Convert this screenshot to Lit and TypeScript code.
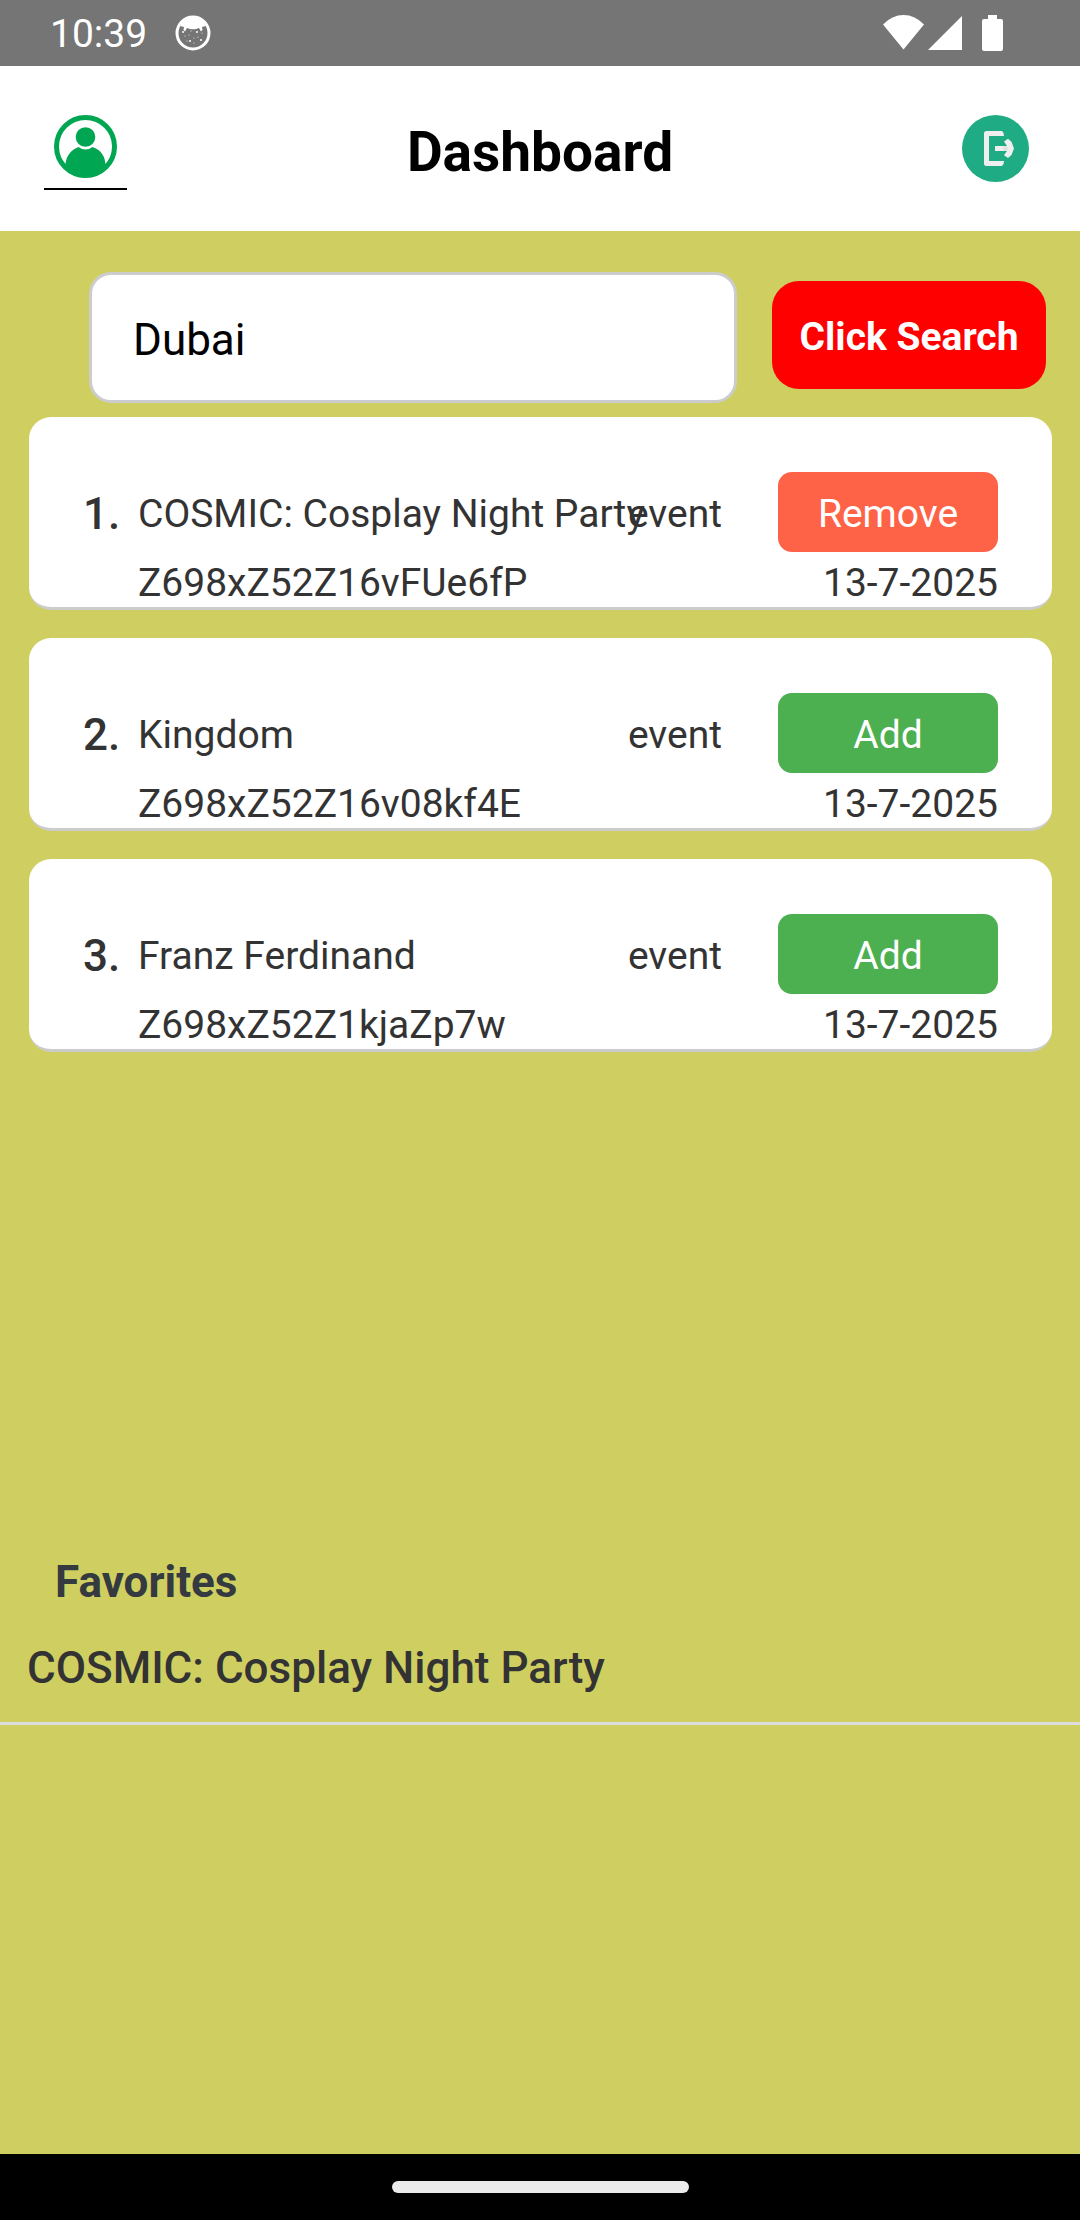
import { LitElement, html, css, svg } from "lit";
import { customElement, property, state } from "lit/decorators.js";
import { classMap } from "lit/directives/class-map.js";

interface EventItem {
  id: string;
  name: string;
  type: string;
  date: string;
}

const EVENTS: EventItem[] = [
  { id: "Z698xZ52Z16vFUe6fP", name: "COSMIC: Cosplay Night Party", type: "event", date: "13-7-2025" },
  { id: "Z698xZ52Z16v08kf4E", name: "Kingdom", type: "event", date: "13-7-2025" },
  { id: "Z698xZ52Z1kjaZp7w", name: "Franz Ferdinand", type: "event", date: "13-7-2025" },
];

const FRECKLES = [
  [8, 17], [10, 21], [14, 20], [15, 26], [19, 23], [19, 28],
  [22, 17], [23, 22], [27, 18], [26, 25], [12, 26], [16, 16],
];

@customElement("status-bar")
export class StatusBar extends LitElement {
  static styles = css`
    :host {
      display: flex;
      align-items: center;
      justify-content: space-between;
      height: 66px;
      padding: 0 75px 0 50px;
      box-sizing: border-box;
      background: #757575;
      color: #fff;
    }
    .group {
      display: flex;
      align-items: center;
      gap: 28px;
    }
    .time {
      padding-top: 3px;
      font-size: 39px;
      line-height: 63px;
    }
    .icon {
      display: block;
    }
  `;

  render() {
    return html`
      <div class="group">
        <span class="time">10:39</span>
        <svg class="icon" width="36" height="36" viewBox="0 0 36 36" aria-hidden="true">
          <circle cx="18" cy="18" r="16" fill="none" stroke="#fff" stroke-width="3" />
          <path
            fill="#fff"
            d="M5 11C8 4 12 2 18 2s10 2 13 9l-4 1 0.500 3-1.500 1.500-2-3.500c-2 1-4 1.300-6 1.300s-4-0.300-6-1.300l-2 3.500L8.500 15l0.500-3z"
          />
          ${FRECKLES.map(([x, y], i) => svg`<circle cx=${x} cy=${y} r=${i % 3 ? 0.5 : 1} fill="#fff" />`)}
        </svg>
      </div>
      <svg class="icon" width="122" height="38" viewBox="0 0 122 38" aria-hidden="true">
        <g fill="#fff">
          <path d="M0 10.500Q9 1 20.500 1T41 10.500L20.500 35.500z" />
          <path d="M45 36L79 2v34z" />
          <path d="M105 1h9v4h4q2 0 2 2v28q0 2-2 2h-17q-2 0-2-2V7q0-2 2-2h4z" />
        </g>
      </svg>
    `;
  }
}

@customElement("event-card")
export class EventCard extends LitElement {
  @property({ type: Number }) index = 1;
  @property({ attribute: false }) item!: EventItem;
  @property({ type: Boolean }) saved = false;

  static styles = css`
    :host {
      display: grid;
      grid-template-columns: 55px minmax(0, 1fr) auto 220px;
      grid-template-rows: 80px 48px;
      row-gap: 7px;
      align-items: center;
      padding: 55px 54px 0;
      background: #fff;
      border-bottom: 3px solid #ccc;
      border-radius: 22px;
      color: #333;
      font-size: 39px;
      line-height: 48px;
      white-space: nowrap;
    }
    .number,
    .name,
    .type,
    .action {
      padding: 4px 0 0;
    }
    .number {
      font-size: 44px;
      font-weight: 500;
    }
    .type {
      margin-right: 56px;
    }
    .code {
      grid-column: 2 / 4;
    }
    .date {
      text-align: right;
    }
    .action {
      height: 80px;
      border: 0;
      border-radius: 14px;
      background: #4caf50;
      color: #fff;
      font: inherit;
    }
    .action.remove {
      background: #ff6347;
    }
  `;

  private toggle() {
    this.dispatchEvent(new CustomEvent("toggle-favorite", { detail: this.item.id }));
  }

  render() {
    const { name, type, id, date } = this.item;
    return html`
      <span class="number">${this.index}.</span>
      <span class="name">${name}</span>
      <span class="type">${type}</span>
      <button class=${classMap({ action: true, remove: this.saved })} @click=${this.toggle}>
        ${this.saved ? "Remove" : "Add"}
      </button>
      <span class="code">${id}</span>
      <span class="date">${date}</span>
    `;
  }
}

@customElement("app-root")
export class AppRoot extends LitElement {
  @state() private query = "Dubai";
  @state() private favorites: string[] = [EVENTS[0].id];

  static styles = css`
    :host {
      display: flex;
      flex-direction: column;
      min-height: 100vh;
      background: #cfcf61;
      font-family: Roboto, sans-serif;
    }
    .header {
      display: grid;
      grid-template-columns: 1fr auto 1fr;
      align-items: start;
      padding: 49px 44px 41px;
      background: #fff;
    }
    .profile {
      display: flex;
      justify-content: center;
      justify-self: start;
      width: 83px;
      height: 73px;
      border-bottom: 2px solid #000;
    }
    .title {
      margin: 4px 0 0;
      font-size: 55px;
      line-height: 66px;
      font-weight: 700;
      color: #000;
    }
    .logout {
      justify-self: end;
      margin-right: 7px;
      padding: 0;
      border: 0;
      background: none;
    }
    .icon {
      display: block;
    }
    .content {
      flex: 1;
      display: grid;
      grid-template-rows: auto 15fr 8fr;
    }
    .search {
      display: flex;
      align-items: center;
      gap: 35px;
      padding: 41px 34px 14px 89px;
    }
    .query {
      flex: 1;
      min-width: 0;
      height: 131px;
      box-sizing: border-box;
      padding: 4px 41px 0;
      border: 3px solid #ccc;
      border-radius: 22px;
      background: #fff;
      color: #000;
      font-family: inherit;
      font-size: 44px;
      outline: none;
    }
    .submit {
      height: 108px;
      width: 274px;
      margin-bottom: 5px;
      padding: 4px 0 0;
      border: 0;
      border-radius: 27px;
      background: #f00;
      color: #fff;
      font-family: inherit;
      font-size: 39px;
      font-weight: 700;
    }
    .results {
      display: flex;
      flex-direction: column;
      gap: 28px;
      margin: 0;
      padding: 0 28px 0 29px;
      list-style: none;
    }
    .heading {
      margin: 0;
      padding: 2px 55px 0;
      font-size: 44px;
      line-height: 60px;
      font-weight: 700;
      color: #343a40;
    }
    .saved {
      margin: 0;
      padding: 0;
      list-style: none;
    }
    .favorite {
      padding: 26px 27px 24px;
      border-bottom: 3px solid #ddd;
      font-size: 44px;
      line-height: 60px;
      font-weight: 500;
      color: #333;
    }
    .navbar {
      display: flex;
      justify-content: center;
      align-items: center;
      height: 66px;
      background: #000;
    }
    .pill {
      width: 297px;
      height: 12px;
      border-radius: 6px;
      background: #ebebeb;
    }
  `;

  private toggle(event: CustomEvent<string>) {
    const id = event.detail;
    this.favorites = this.favorites.includes(id)
      ? this.favorites.filter((saved) => saved !== id)
      : [...this.favorites, id];
  }

  render() {
    return html`
      <status-bar></status-bar>
      <header class="header">
        <a class="profile" href="#profile" aria-label="Profile">
          <svg class="icon" width="63" height="63" viewBox="0 0 63 63">
            <circle cx="31.500" cy="31.500" r="29" fill="none" stroke="#00a651" stroke-width="5" />
            <circle cx="31.500" cy="22" r="9.800" fill="#00a651" />
            <path
              fill="#00a651"
              d="M24.500 32q7 5 14 0C47 35 51 41 51.500 49.500L56 50Q46 62.500 31.500 62.500T7 50l4.500-0.500C12 41 17 35 24.500 32z"
            />
          </svg>
        </a>
        <h1 class="title">Dashboard</h1>
        <button class="logout" aria-label="Log out">
          <svg class="icon" width="67" height="67" viewBox="0 0 67 67">
            <circle cx="33.500" cy="33.500" r="33.500" fill="#1fab83" />
            <path
              fill="#efeff0"
              d="M24.500 16H40q2 1.500 2 5H27v25h15q0 3.500-2 5H24.500q-2.500 0-2.500-2.500v-30q0-2.500 2.500-2.500z"
            />
            <path fill="#efeff0" d="M33 31h12l-3-4.500 4-2.800 3.500 3L52 33.500l-2.500 6.500-3.500 3-4-2.800L45 36H33z" />
            <circle cx="43.500" cy="33.500" r="2.500" fill="#dfe2e3" />
          </svg>
        </button>
      </header>
      <main class="content">
        <form class="search" @submit=${(e: Event) => e.preventDefault()}>
          <input
            class="query"
            type="text"
            aria-label="City"
            .value=${this.query}
            @input=${(e: Event) => (this.query = (e.target as HTMLInputElement).value)}
          />
          <button class="submit">Click Search</button>
        </form>
        <ul class="results">
          ${EVENTS.map(
            (item, i) => html`<li>
              <event-card
                .index=${i + 1}
                .item=${item}
                .saved=${this.favorites.includes(item.id)}
                @toggle-favorite=${this.toggle}
              ></event-card>
            </li>`,
          )}
        </ul>
        <section>
          <h2 class="heading">Favorites</h2>
          <ul class="saved">
            ${EVENTS.filter((item) => this.favorites.includes(item.id)).map(
              (item) => html`<li class="favorite">${item.name}</li>`,
            )}
          </ul>
        </section>
      </main>
      <footer class="navbar"><div class="pill"></div></footer>
    `;
  }
}
